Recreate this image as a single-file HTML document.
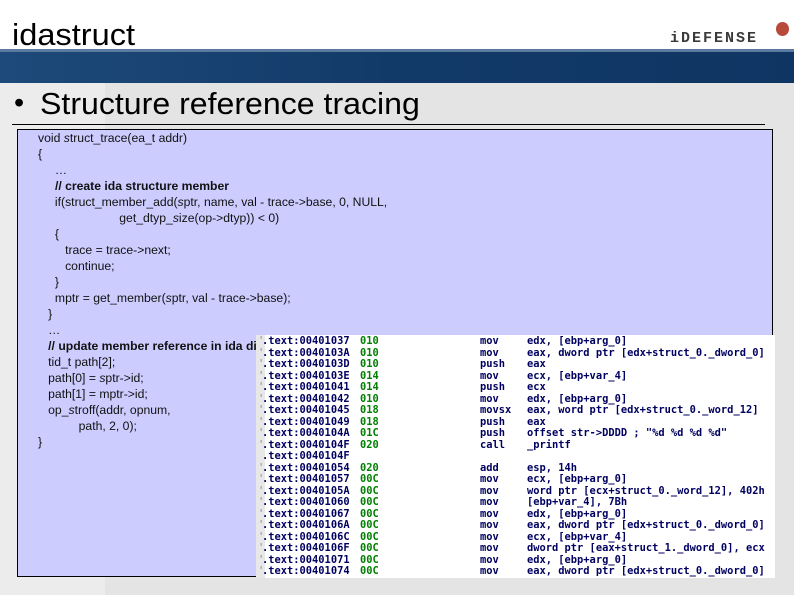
<!DOCTYPE html>
<html><head><style>
body{margin:0;width:794px;height:595px;overflow:hidden;background:#e4e4e4;font-family:"Liberation Sans",sans-serif;position:relative}
.hdr{position:absolute;left:0;top:0;width:794px;height:49px;background:#fff}
.title{position:absolute;left:12px;top:17px;font-size:31px;color:#000;transform:scaleX(1.05);transform-origin:left}
.band{position:absolute;left:0;top:49px;width:794px;height:34px;background:linear-gradient(90deg,#1d4a7a,#123a68 50%,#0f3563);border-top:3px solid #5a7aa0;box-sizing:border-box}
.logo{position:absolute;left:670px;top:30px;font-size:15px;font-weight:bold;color:#3a3a3a;letter-spacing:2px;font-family:"Liberation Mono",monospace}
.gem{position:absolute;left:776px;top:22px;width:13px;height:14px;border-radius:50%;background:#b84a3a}
.light{position:absolute;left:0;top:83px;width:105px;height:512px;background:#ececec}
.bul{position:absolute;left:14px;top:87px;font-size:29px}
.h2{position:absolute;left:40px;top:86px;font-size:31px;color:#000;transform:scaleX(1.035);transform-origin:left}
.rule{position:absolute;left:12px;top:124px;width:753px;height:1px;background:#000}
.box{position:absolute;left:17px;top:129px;width:756px;height:448px;background:#ccccff;border:1px solid #000;box-sizing:border-box}
.code{position:absolute;left:38px;top:130px;font-size:12.2px;line-height:16px;color:#111;white-space:pre}
.ida{position:absolute;left:256px;top:335px;width:519px;height:243px;background:#fff;font-family:"DejaVu Sans Mono",monospace;font-weight:bold;font-size:10.4px;line-height:11.5px;color:#000060}
.strip{position:absolute;left:0;top:0;width:9px;height:243px;background:#e8e8e8}
.c{position:absolute;top:1px;white-space:pre}
.g{color:#008000}
</style></head><body>
<div class="hdr"></div>
<div class="title">idastruct</div>
<div class="logo">iDEFENSE</div><div class="gem"></div>
<div class="band"></div>
<div class="light"></div>
<div class="bul">•</div>
<div class="h2">Structure reference tracing</div>
<div class="rule"></div>
<div class="box"></div>
<div class="code">void <i>s</i>truct_trace(ea_t addr)
{
     …
     <b>// create ida structure member</b>
     if(struct_member_add(<i>s</i>ptr, name, val - trace-&gt;base, 0, NULL,
                        get_dtyp_<i>s</i>ize(op-&gt;dtyp)) &lt; 0)
     {
        trace = trace-&gt;next;
        continue;
     }
     mptr = get_member(<i>s</i>ptr, val - trace-&gt;base);
   }
   …
   <b>// update member reference in ida di</b>
   tid_t path[2];
   path[0] = <i>s</i>ptr-&gt;id;
   path[1] = mptr-&gt;id;
   op_<i>s</i>troff(addr, opnum,
            path, 2, 0);
}</div>
<div class="ida"><div class="strip"></div>
<div class="c" style="left:2px;font-weight:normal;color:#888">'
'
'
'
'
'
'
'
'
'

'
'
'
'
'
'
'
'
'
'</div>
<div class="c" style="left:6px">.text:00401037
.text:0040103A
.text:0040103D
.text:0040103E
.text:00401041
.text:00401042
.text:00401045
.text:00401049
.text:0040104A
.text:0040104F
.text:0040104F
.text:00401054
.text:00401057
.text:0040105A
.text:00401060
.text:00401067
.text:0040106A
.text:0040106C
.text:0040106F
.text:00401071
.text:00401074</div>
<div class="c g" style="left:104px">010
010
010
014
014
010
018
018
01C
020

020
00C
00C
00C
00C
00C
00C
00C
00C
00C</div>
<div class="c" style="left:224px">mov
mov
push
mov
push
mov
movsx
push
push
call

add
mov
mov
mov
mov
mov
mov
mov
mov
mov</div>
<div class="c" style="left:271px">edx, [ebp+arg_0]
eax, dword ptr [edx+struct_0._dword_0]
eax
ecx, [ebp+var_4]
ecx
edx, [ebp+arg_0]
eax, word ptr [edx+struct_0._word_12]
eax
offset str->DDDD ; "%d %d %d %d"
_printf

esp, 14h
ecx, [ebp+arg_0]
word ptr [ecx+struct_0._word_12], 402h
[ebp+var_4], 7Bh
edx, [ebp+arg_0]
eax, dword ptr [edx+struct_0._dword_0]
ecx, [ebp+var_4]
dword ptr [eax+struct_1._dword_0], ecx
edx, [ebp+arg_0]
eax, dword ptr [edx+struct_0._dword_0]</div>
</div>
</body></html>
